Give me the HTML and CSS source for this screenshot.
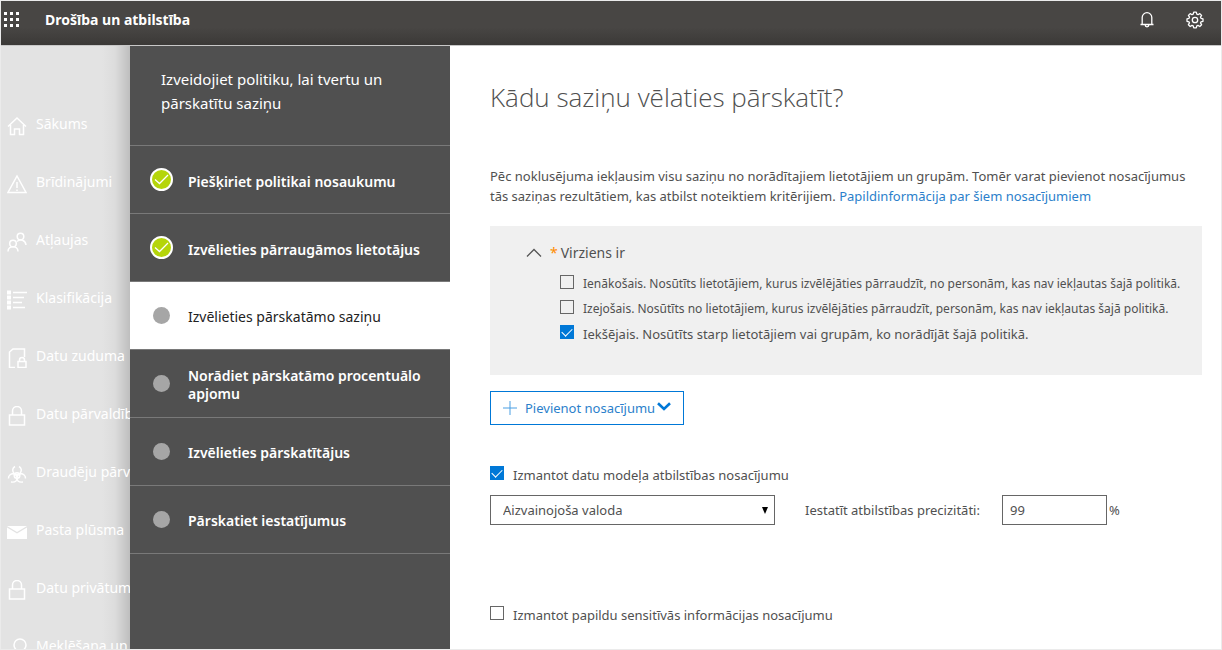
FILE: index.html
```html
<!DOCTYPE html>
<html lang="lv">
<head>
<meta charset="utf-8">
<title>Drošība un atbilstība</title>
<link rel="stylesheet" href="styles.css">
</head>
<body>
<header class="topbar">
  <button class="icon-button" type="button" aria-label="Programmu palaidējs">
    <svg width="18" height="18" viewBox="0 0 18 18" fill="#fff"><path d="M1 1h3v3H1zM7 1h3v3H7zM13 1h3v3h-3zM1 7h3v3H1zM7 7h3v3H7zM13 7h3v3h-3zM1 13h3v3H1zM7 13h3v3H7zM13 13h3v3h-3z"/></svg>
  </button>
  <span class="product">Drošība un atbilstība</span>
  <div class="topbar-actions">
    <button class="icon-button" type="button" aria-label="Paziņojumi">
      <svg width="16" height="18" viewBox="0 0 16 18" fill="none" stroke="#fff" stroke-width="1.3"><path d="M3.2 13V6.5a4.8 4.8 0 0 1 9.6 0V13M1.5 13.5h13M6.2 14a1.8 1.8 0 0 0 3.6 0"/></svg>
    </button>
    <button class="icon-button" type="button" aria-label="Iestatījumi">
      <svg width="18" height="18" viewBox="0 0 18 18" fill="none" stroke="#fff" stroke-width="1.3" stroke-linejoin="round"><path d="M7.700 1.200h2.600l.5 2 1.200.5 1.800-1.100 1.800 1.800L14.500 6.200l.5 1.100 2 .5v2.500l-2 .5-.5 1.100 1.100 1.800-1.800 1.800-1.800-1.100-1.200.5-.5 2H7.700l-.5-2-1.200-.5-1.800 1.100-1.800-1.800 1.100-1.800-.5-1.100-2-.5V7.800l2-.5.5-1.100-1.100-1.800 1.800-1.800L6 3.700l1.200-.5z"/><circle cx="9" cy="9" r="2.700"/></svg>
    </button>
  </div>
</header>
<div class="workspace">
  <nav class="sidenav">
    <a class="nav-item" href="#"><svg class="nav-icon" viewBox="0 0 20 20"><path d="M1 10.500 10 2l9 8.500M3.500 9v9.500h4V13h5v5.500h4V9"/></svg><span>Sākums</span></a>
    <a class="nav-item" href="#"><svg class="nav-icon" viewBox="0 0 20 20"><path d="M10 2 19 18.500H1zM10 8v6M10 15.500V17"/></svg><span>Brīdinājumi</span></a>
    <a class="nav-item" href="#"><svg class="nav-icon" viewBox="0 0 20 20"><circle cx="13.500" cy="4.500" r="3.300"/><circle cx="6" cy="11.500" r="3.300"/><path d="M1 19.500c0-6.500 10-6.500 10 0M10 9.500c3-3 8.500-1.500 9 3.500"/></svg><span>Atļaujas</span></a>
    <a class="nav-item" href="#"><svg class="nav-icon" viewBox="0 0 20 20"><path d="M6 2.500h14M6 7.500h11M6 12.500h9M6 17.500h12"/><path class="solid" d="M0 .5h4v4H0zM0 5.500h4v4H0zM0 10.500h4v4H0zM0 15.500h4v4H0z"/></svg><span>Klasifikācija</span></a>
    <a class="nav-item" href="#"><svg class="nav-icon" viewBox="0 0 20 20"><path d="M8 19.500H2.500V4L6 1h11.500v8M11 13.500h8v6h-8zM12.500 13.500V12a2.500 2.500 0 0 1 5 0v1.500"/></svg><span>Datu zuduma</span></a>
    <a class="nav-item" href="#"><svg class="nav-icon" viewBox="0 0 20 20"><path d="M2.500 9h15v10h-15zM5.500 9V5a4.500 4.500 0 0 1 9 0v4"/></svg><span>Datu pārvaldība</span></a>
    <a class="nav-item" href="#"><svg class="nav-icon" viewBox="0 0 20 20"><circle cx="10" cy="11.500" r="2.800"/><path d="M8 2.500a4.300 4.300 0 1 0 4 0M1.500 14.500a4.300 4.300 0 1 1 7.500 2.500q-1.500 1.500-5 1M18.500 14.500a4.300 4.300 0 1 0-7.500 2.500q1.500 1.500 5 1"/></svg><span>Draudēju pārvaldība</span></a>
    <a class="nav-item" href="#"><svg class="nav-icon" viewBox="0 0 20 20"><path class="solid" d="M0 4h20L10 10zM0 5.500 10 11.500 20 5.500V17H0z"/></svg><span>Pasta plūsma</span></a>
    <a class="nav-item" href="#"><svg class="nav-icon" viewBox="0 0 20 20"><path d="M2.500 9h15v10h-15zM5.500 9V5a4.500 4.500 0 0 1 9 0v4"/></svg><span>Datu privātums</span></a>
    <a class="nav-item" href="#"><svg class="nav-icon" viewBox="0 0 20 20"><circle cx="13" cy="7" r="6"/><path d="M8.500 11.500 1 19"/></svg><span>Meklēšana un izmeklēšana</span></a>
  </nav>
  <aside class="wizard">
    <h2 class="wizard-title">Izveidojiet politiku, lai tvertu un pārskatītu saziņu</h2>
    <ol class="steps">
      <li class="step complete"><span class="mark"><svg width="15" height="11" viewBox="0 0 15 11" fill="none" stroke="#fff" stroke-width="1.300"><path d="m1 5.500 4.500 4L14 1"/></svg></span><span class="step-label">Piešķiriet politikai nosaukumu</span></li>
      <li class="step complete"><span class="mark"><svg width="15" height="11" viewBox="0 0 15 11" fill="none" stroke="#fff" stroke-width="1.300"><path d="m1 5.500 4.500 4L14 1"/></svg></span><span class="step-label">Izvēlieties pārraugāmos lietotājus</span></li>
      <li class="step current" aria-current="step"><span class="mark"></span><span class="step-label">Izvēlieties pārskatāmo saziņu</span></li>
      <li class="step"><span class="mark"></span><span class="step-label">Norādiet pārskatāmo procentuālo apjomu</span></li>
      <li class="step"><span class="mark"></span><span class="step-label">Izvēlieties pārskatītājus</span></li>
      <li class="step"><span class="mark"></span><span class="step-label">Pārskatiet iestatījumus</span></li>
    </ol>
  </aside>
  <main class="content">
    <h1 class="title">Kādu saziņu vēlaties pārskatīt?</h1>
    <p class="intro">Pēc noklusējuma iekļausim visu saziņu no norādītajiem lietotājiem un grupām. Tomēr varat pievienot nosacījumus<br>tās saziņas rezultātiem, kas atbilst noteiktiem kritērijiem. <a href="#">Papildinformācija par šiem nosacījumiem</a></p>
    <section class="panel">
      <button class="panel-head" type="button" aria-expanded="true">
        <svg width="16" height="10" viewBox="0 0 16 10" fill="none" stroke="#555" stroke-width="1.300"><path d="M1 8.500 8 1.500l7 7"/></svg>
        <span class="required">*</span><span>Virziens ir</span>
      </button>
      <div class="options">
        <label class="check compact"><input type="checkbox"><span>Ienākošais. Nosūtīts lietotājiem, kurus izvēlējāties pārraudzīt, no personām, kas nav iekļautas šajā politikā.</span></label>
        <label class="check compact"><input type="checkbox"><span>Izejošais. Nosūtīts no lietotājiem, kurus izvēlējāties pārraudzīt, personām, kas nav iekļautas šajā politikā.</span></label>
        <label class="check"><input type="checkbox" checked><span>Iekšējais. Nosūtīts starp lietotājiem vai grupām, ko norādījāt šajā politikā.</span></label>
      </div>
    </section>
    <button class="add" type="button">
      <svg width="14" height="14" viewBox="0 0 14 14" fill="none" stroke="#4a9fe3" stroke-width="1"><path d="M7 0v14M0 7h14"/></svg>
      <span>Pievienot nosacījumu</span>
      <svg class="add-chevron" width="14" height="9" viewBox="0 0 14 9" fill="none" stroke="#0078d7" stroke-width="2.600"><path d="m1 1.300 6 5.700 6-5.700"/></svg>
    </button>
    <label class="check"><input type="checkbox" checked><span>Izmantot datu modeļa atbilstības nosacījumu</span></label>
    <div class="model-row">
      <div class="select-wrap">
        <select class="select" aria-label="Datu modelis"><option>Aizvainojoša valoda</option></select>
        <svg class="select-arrow" width="6" height="7" viewBox="0 0 6 7"><path d="M0 0h6L3 7z"/></svg>
      </div>
      <label class="accuracy-label" for="accuracy">Iestatīt atbilstības precizitāti:</label>
      <input class="accuracy" id="accuracy" type="text" value="99">
      <span class="percent">%</span>
    </div>
    <label class="check"><input type="checkbox"><span>Izmantot papildu sensitīvās informācijas nosacījumu</span></label>
  </main>
</div>
</body>
</html>
```
FILE: styles.css
```css
* {
  box-sizing: border-box;
}

body {
  margin: 0;
  height: 100vh;
  display: flex;
  flex-direction: column;
  overflow: hidden;
  border: 1px solid #ebebeb;
  background: #fff;
  color: #505050;
  font: 13px/20px "Noto Sans", "Open Sans", sans-serif;
}

button,
input,
select {
  font: inherit;
  color: inherit;
}

/* Top bar */
.topbar {
  flex: none;
  display: flex;
  align-items: center;
  height: 45px;
  padding: 0 17px 6px 0;
  border-bottom: 1px solid #c8c8c8;
  background: linear-gradient(#484644 60%, #3b3937);
  background-clip: padding-box;
  color: #fff;
}

.icon-button {
  display: flex;
  padding: 0;
  border: 0;
  background: none;
}

.icon-button:first-child {
  padding-left: 2px;
}

.product {
  margin-left: 24px;
  font-size: 14px;
  font-weight: 700;
}

.topbar-actions {
  display: flex;
  align-items: center;
  gap: 31px;
  margin-left: auto;
}

.topbar-actions .icon-button {
  padding: 0;
}

.workspace {
  flex: 1;
  display: flex;
  min-height: 0;
}

/* Side navigation */
.sidenav {
  flex: none;
  width: 129px;
  padding-top: 50px;
  overflow: hidden;
  background: linear-gradient(90deg, #e3e3e3 101px, #dcdcdc 114px, #bebebe);
}

.nav-item {
  display: flex;
  align-items: center;
  gap: 9px;
  height: 58px;
  padding-left: 6px;
  color: #fff;
  font-size: 14px;
  white-space: nowrap;
  text-decoration: none;
}

.nav-item span {
  padding-bottom: 2px;
}

.nav-icon {
  flex: none;
  width: 20px;
  height: 20px;
  margin-top: 2px;
  fill: none;
  stroke: #fff;
  stroke-width: 1.5;
}

.nav-icon .solid {
  fill: #fff;
  stroke: none;
}

/* Wizard steps */
.wizard {
  flex: none;
  width: 320px;
  background: #505050;
  color: #fff;
}

.wizard-title {
  height: 100px;
  margin: 0;
  padding: 21px 50px 0 31px;
  border-bottom: 1px solid #797979;
  font-size: 15px;
  font-weight: 400;
  line-height: 24px;
}

.steps {
  margin: 0;
  padding: 0;
  list-style: none;
}

.step {
  display: flex;
  align-items: center;
  height: 68px;
  padding: 0 20px;
  border-bottom: 1px solid #797979;
  font-size: 14px;
  font-weight: 600;
  line-height: 18px;
}

.current {
  background: #fff;
  color: #222;
  font-weight: 400;
}

.step-label {
  margin-left: 15px;
  padding-top: 2px;
}

.complete .step-label {
  padding-top: 4px;
}

.mark {
  flex: none;
  display: flex;
  align-items: center;
  justify-content: center;
  width: 17px;
  height: 17px;
  margin: 0 3px;
  border-radius: 50%;
  background: #a6a6a6;
}

.complete .mark {
  width: 23px;
  height: 23px;
  margin: 0;
  border: 2px solid #fff;
  background: #b5d50a;
}

/* Policy form */
.content {
  flex: 1;
  min-width: 0;
  padding: 31px 0 0 40px;
}

.title {
  margin: 0;
  font: 300 26px/40px "Open Sans", "Noto Sans", sans-serif;
}

.intro {
  margin: 49px 0 20px;
  white-space: nowrap;
}

.intro a {
  color: #2b7fcb;
  text-decoration: none;
}

.panel {
  margin-right: 19px;
  padding: 17px 0 31px 36px;
  background: #f0f0f0;
}

.panel-head {
  display: flex;
  align-items: center;
  padding: 0;
  border: 0;
  background: none;
  font-size: 14px;
}

.required {
  margin: 0 3px 0 8px;
  color: #ff8c00;
}

.options {
  display: grid;
  gap: 5px;
  margin: 11px 0 0 34px;
}

.check {
  display: flex;
  align-items: center;
  gap: 9px;
  white-space: nowrap;
}

.compact {
  font-size: 12px;
}

.check input {
  flex: none;
  display: flex;
  align-items: center;
  justify-content: center;
  appearance: none;
  width: 14px;
  height: 14px;
  margin: 0 0 4px;
  border: 1px solid #666;
  background: transparent;
}

.check input:checked {
  border-color: #0078d7;
  background: #0078d7;
}

.check input:checked::after {
  content: "";
  width: 9px;
  height: 5px;
  margin-bottom: 3px;
  border: solid #fff;
  border-width: 0 0 1px 1px;
  transform: rotate(-45deg);
}

.add {
  display: flex;
  align-items: center;
  height: 34px;
  margin: 16px 0 40px;
  padding: 0 12px;
  border: 1px solid #0078d7;
  background: #fff;
  color: #2b7fcb;
}

.add span {
  margin: 0 2px 0 8px;
}

.add-chevron {
  margin-bottom: 4px;
}

.model-row {
  display: flex;
  align-items: center;
  margin: 10px 0 80px;
}

.select-wrap {
  display: grid;
  align-items: center;
  width: 285px;
}

.select,
.select-arrow {
  grid-area: 1 / 1;
}

.select,
.accuracy {
  height: 30px;
  border: 1px solid #666;
  border-radius: 0;
  background: #fff;
}

.select {
  appearance: none;
  padding: 0 12px;
}

.select-arrow {
  justify-self: end;
  margin-right: 7px;
  pointer-events: none;
}

.accuracy-label {
  margin: 0 22px 0 30px;
}

.accuracy {
  width: 105px;
  padding: 0 7px;
}

.percent {
  margin-left: 2px;
}
```
